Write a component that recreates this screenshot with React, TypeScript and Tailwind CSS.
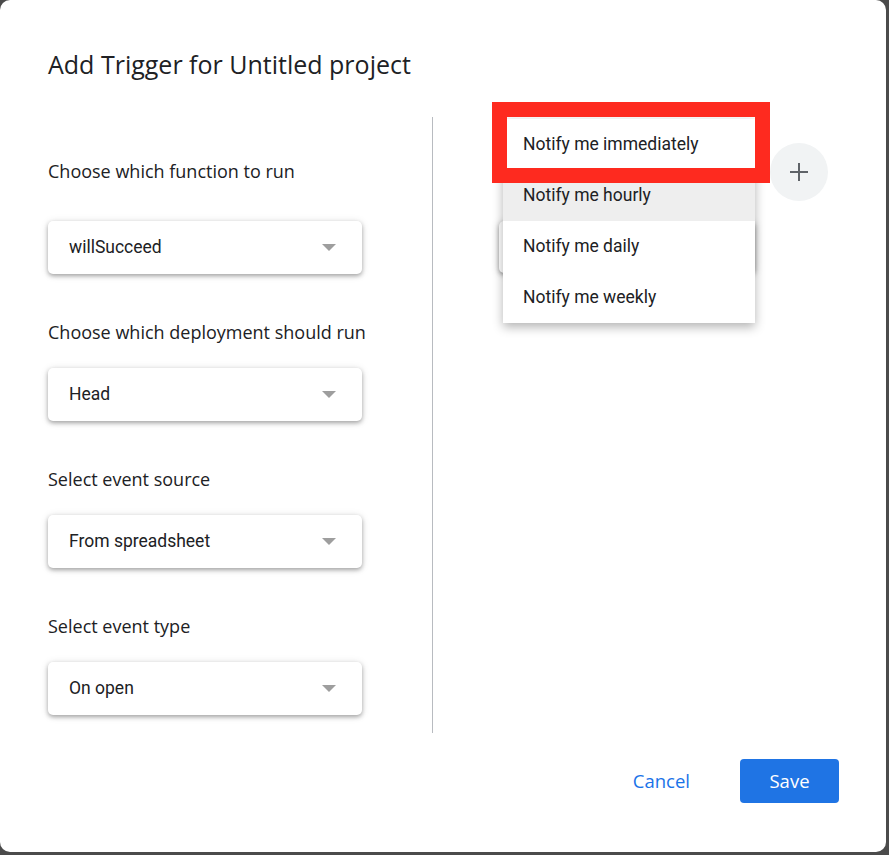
import React from 'react';

const labelFont = { fontFamily: '"Open Sans", "Noto Sans", sans-serif' };
const bodyFont = { fontFamily: 'Roboto, "Liberation Sans", sans-serif' };

const Arrow = () => (
  <svg width="14" height="7" viewBox="0 0 14 7">
    <polygon points="0,0 14,0 7,7" fill="#9e9e9e" />
  </svg>
);

const Select: React.FC<{ value: string }> = ({ value }) => (
  <div
    className="w-[314px] h-[53px] bg-white rounded-[5px] shadow-[0_2px_4px_rgba(0,0,0,0.3),0_1px_8px_rgba(0,0,0,0.12)] flex items-center justify-between pl-[21px] pr-[26px] text-[17.5px] text-[#202124]"
    style={bodyFont}
  >
    <span>{value}</span>
    <Arrow />
  </div>
);

const Label: React.FC<{ text: string; className?: string }> = ({ text, className }) => (
  <div className={`text-[18px] leading-[24px] text-[#202124] ${className ?? ''}`} style={labelFont}>
    {text}
  </div>
);

const menuItems = ['Notify me immediately', 'Notify me hourly', 'Notify me daily', 'Notify me weekly'];

export default function App() {
  return (
    <div className="w-[889px] h-[855px] bg-[#4b4b4b]">
      <div className="relative w-[886px] h-[852px] bg-white rounded-[10px] flex flex-col">
        {/* Title */}
        <h1
          className="pl-12 pt-[50px] text-[25px] leading-[28px] text-[#202124]"
          style={labelFont}
        >
          Add Trigger for Untitled project
        </h1>

        {/* Body */}
        <div className="flex mt-[39px] h-[616px]">
          <div className="w-[432px] pl-12 pt-[42px] flex flex-col">
            <Label text="Choose which function to run" />
            <div className="mt-[38px]"><Select value="willSucceed" /></div>
            <Label text="Choose which deployment should run" className="mt-[46px]" />
            <div className="mt-[24px]"><Select value="Head" /></div>
            <Label text="Select event source" className="mt-[46px]" />
            <div className="mt-[24px]"><Select value="From spreadsheet" /></div>
            <Label text="Select event type" className="mt-[46px]" />
            <div className="mt-[24px]"><Select value="On open" /></div>
          </div>

          <div className="w-px h-full bg-[#b8bbc0]" />

          <div className="flex-1 pl-[66px] pt-[26px] flex flex-col">
            <div className="flex items-center gap-3">
              <div className="w-[259px] h-[52px]" />
              <button className="w-[58px] h-[58px] rounded-full bg-[#f1f3f4] flex items-center justify-center">
                <svg width="18" height="18" viewBox="0 0 18 18">
                  <path d="M9 0v18M0 9h18" stroke="#5f6368" strokeWidth="2" />
                </svg>
              </button>
            </div>
            <div className="mt-[20px] w-[256px] h-[52px] bg-white rounded-[5px] shadow-[0_2px_4px_rgba(0,0,0,0.3),0_1px_8px_rgba(0,0,0,0.2)]" />
          </div>
        </div>

        {/* Footer */}
        <div className="flex justify-end items-center mt-[26px] pr-[47px] gap-[34px]">
          <button className="px-4 h-[44px] text-[18.5px] font-medium text-[#1a73e8]" style={labelFont}>
            Cancel
          </button>
          <button
            className="w-[99px] h-[44px] rounded-[4px] bg-[#1f74e4] text-white text-[18.5px] font-medium"
            style={labelFont}
          >
            Save
          </button>
        </div>

        {/* Open dropdown menu */}
        <div
          className="absolute left-[503px] top-[119px] w-[252px] bg-white shadow-[0_4px_10px_rgba(0,0,0,0.3)]"
          style={bodyFont}
        >
          {menuItems.map((item, i) => (
            <div
              key={item}
              className={`h-[51px] flex items-center pl-5 text-[17.5px] text-[#202124] ${i === 1 ? 'bg-[#eeeeee]' : ''}`}
            >
              {item}
            </div>
          ))}
        </div>

        {/* Highlight annotation */}
        <div className="absolute left-[492px] top-[102px] w-[278px] h-[81px] border-[15px] border-[#fe2a1f]" />
      </div>
    </div>
  );
}
